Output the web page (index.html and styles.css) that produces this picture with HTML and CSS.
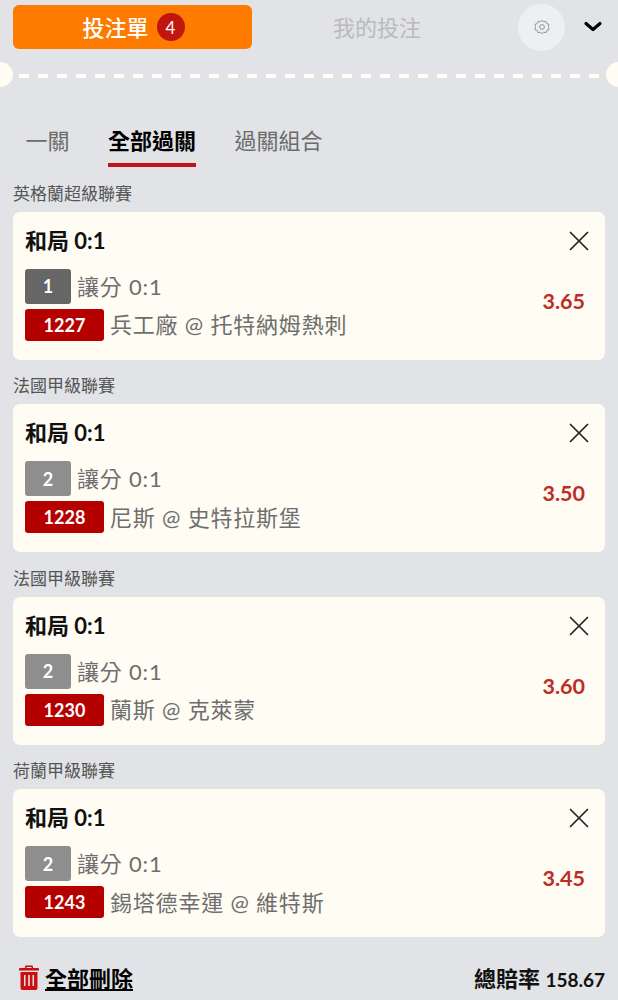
FILE: index.html
```html
<!DOCTYPE html>
<html lang="zh-Hant">
<head>
  <meta charset="UTF-8" />
  <meta name="viewport" content="width=device-width, initial-scale=1.0"/>
  <title>投注單</title>
  <link rel="stylesheet" href="styles.css">
</head>
<body>
  <div class="app">
    <div class="topbar">
      <button class="slip-btn"><span class="slip-label">投注單</span> <span class="count">4</span></button>
      <div class="my-bets">我的投注</div>
      <div class="gear">
        <svg width="16" height="16" viewBox="0 0 24 24" fill="none" stroke="#8b8b8e" stroke-width="1.4" stroke-linejoin="round">
          <path d="M12 2l2.6 2.200 3.400-.6 1.200 3.200 3.200 1.200-.6 3.400L22 12l-.2.6.6 3.400-3.200 1.200-1.200 3.200-3.400-.6L12 22l-2.600-2.200-3.400.6-1.200-3.200-3.200-1.200.6-3.400L2 12l.2-.6-.6-3.400 3.200-1.200L6 3.600l3.400.6z"/>
          <circle cx="12" cy="12" r="3.6"/>
        </svg>
      </div>
      <svg class="chevron" width="20" height="12" viewBox="0 0 20 12" fill="none" stroke="#000" stroke-width="3.200" stroke-linecap="round" stroke-linejoin="round">
        <path d="M3 2.500L10 8.500l7-6"/>
      </svg>
    </div>

    <div class="divider"></div>

    <div class="tabs">
      <div class="tab">一關</div>
      <div class="tab active">全部過關</div>
      <div class="tab">過關組合</div>
    </div>

    <div class="league">英格蘭超級聯賽</div>
    <div class="card">
      <div class="card-main">
        <div class="pick">和局 0:1</div>
        <div class="row row-first"><span class="tag dark">1</span><span class="info">讓分 0:1</span></div>
        <div class="row"><span class="code">1227</span><span class="info">兵工廠 @ 托特納姆熱刺</span></div>
      </div>
      <div class="card-side">
        <svg class="close" width="22" height="22" viewBox="0 0 22 22" stroke="#222" stroke-width="1.700" stroke-linecap="round"><path d="M2.500 2.500l17 17M19.500 2.500l-17 17"/></svg>
        <div class="odds">3.65</div>
      </div>
    </div>

    <div class="league">法國甲級聯賽</div>
    <div class="card">
      <div class="card-main">
        <div class="pick">和局 0:1</div>
        <div class="row row-first"><span class="tag">2</span><span class="info">讓分 0:1</span></div>
        <div class="row"><span class="code">1228</span><span class="info">尼斯 @ 史特拉斯堡</span></div>
      </div>
      <div class="card-side">
        <svg class="close" width="22" height="22" viewBox="0 0 22 22" stroke="#222" stroke-width="1.700" stroke-linecap="round"><path d="M2.500 2.500l17 17M19.500 2.500l-17 17"/></svg>
        <div class="odds">3.50</div>
      </div>
    </div>

    <div class="league">法國甲級聯賽</div>
    <div class="card">
      <div class="card-main">
        <div class="pick">和局 0:1</div>
        <div class="row row-first"><span class="tag">2</span><span class="info">讓分 0:1</span></div>
        <div class="row"><span class="code">1230</span><span class="info">蘭斯 @ 克萊蒙</span></div>
      </div>
      <div class="card-side">
        <svg class="close" width="22" height="22" viewBox="0 0 22 22" stroke="#222" stroke-width="1.700" stroke-linecap="round"><path d="M2.500 2.500l17 17M19.500 2.500l-17 17"/></svg>
        <div class="odds">3.60</div>
      </div>
    </div>

    <div class="league">荷蘭甲級聯賽</div>
    <div class="card">
      <div class="card-main">
        <div class="pick">和局 0:1</div>
        <div class="row row-first"><span class="tag">2</span><span class="info">讓分 0:1</span></div>
        <div class="row"><span class="code">1243</span><span class="info">錫塔德幸運 @ 維特斯</span></div>
      </div>
      <div class="card-side">
        <svg class="close" width="22" height="22" viewBox="0 0 22 22" stroke="#222" stroke-width="1.700" stroke-linecap="round"><path d="M2.500 2.500l17 17M19.500 2.500l-17 17"/></svg>
        <div class="odds">3.45</div>
      </div>
    </div>

    <div class="footer">
      <div class="delete-all">
        <svg width="20" height="25" viewBox="0 0 20 25" fill="#c90f0f">
          <path d="M7 0.500h6a1 1 0 0 1 1 1V3h5a1 1 0 0 1 1 1v1.500H0V4a1 1 0 0 1 1-1h5V1.500a1 1 0 0 1 1-1zM7.500 2v1h5V2z"/>
          <path fill-rule="evenodd" d="M1.500 7h17v16a2 2 0 0 1-2 2h-13a2 2 0 0 1-2-2zM5 10v11h1.500V10zm4.200 0v11h1.600V10zm4.300 0v11H15V10z"/>
        </svg>
        <span class="delete-text">全部刪除</span>
      </div>
      <div class="total">總賠率 <span class="total-num">158.67</span></div>
    </div>
  </div>
</body>
</html>
```

FILE: styles.css
```css
* {
  box-sizing: border-box;
}

html, body {
  margin: 0;
  padding: 0;
}

body {
  width: 618px;
  height: 1000px;
  overflow: hidden;
  background: #e2e3e6;
  font-family: Lato, 'Noto Sans CJK TC', sans-serif;
  color: #000;
}

.app {
  padding: 5px 13px 0;
}

.topbar {
  display: flex;
  align-items: center;
  height: 44px;
}

.slip-btn {
  width: 239px;
  height: 44px;
  display: flex;
  align-items: center;
  justify-content: center;
  gap: 8px;
  border: none;
  border-radius: 6px;
  background: #ff7b00;
  color: #fff;
  font-family: inherit;
  font-size: 22px;
  font-weight: 500;
  padding: 0 0 0 2px;
}

.slip-label {
  padding-bottom: 2px;
}

.count {
  width: 28px;
  height: 28px;
  border-radius: 50%;
  background: #c1150f;
  color: #fff;
  font-size: 17px;
  font-weight: 400;
  display: flex;
  align-items: center;
  justify-content: center;
}

.my-bets {
  width: 250px;
  padding-bottom: 3px;
  text-align: center;
  font-size: 22px;
  color: #b9babc;
}

.gear {
  width: 47px;
  height: 47px;
  margin-left: 16px;
  border-radius: 50%;
  background: #eeeff3;
  display: flex;
  align-items: center;
  justify-content: center;
  flex-shrink: 0;
}

.chevron {
  margin-left: 18px;
  flex-shrink: 0;
}

.divider {
  position: relative;
  height: 4px;
  margin: 25px 6px 0 6px;
  background: repeating-linear-gradient(to right, #fffcf3 0, #fffcf3 10px, transparent 10px, transparent 19px);
}

.divider::before,
.divider::after {
  content: "";
  position: absolute;
  top: -12px;
  width: 25px;
  height: 25px;
  border-radius: 50%;
  background: #fffcf3;
}

.divider::before {
  left: -31px;
}

.divider::after {
  right: -32px;
}

.tabs {
  display: flex;
  gap: 38.5px;
  margin: 43px 0 1.1px;
  padding-left: 12.5px;
}

.tab {
  height: 46px;
  padding-top: 2px;
  font-size: 22px;
  line-height: 36px;
  color: #6b6b6b;
}

.tab.active {
  color: #000;
  font-weight: 700;
  border-bottom: 4px solid #c1141a;
}

.league {
  height: 26px;
  margin-top: 13.5px;
  font-size: 17px;
  line-height: 26px;
  color: #555;
}

.card {
  display: flex;
  justify-content: space-between;
  width: 592px;
  height: 148px;
  margin-top: 5px;
  padding: 13px 20px 0 12px;
  border-radius: 7px;
  background: #fffcf3;
}

.pick {
  height: 32px;
  font-size: 22px;
  font-weight: 700;
  line-height: 32px;
  color: #111;
}

.row {
  display: flex;
  align-items: center;
  gap: 6px;
  margin-top: 5px;
  height: 32px;
}

.row-first {
  margin-top: 12px;
  height: 35px;
}

.tag {
  width: 46px;
  height: 35px;
  border-radius: 3px;
  background: #8e8e8e;
  color: #fff;
  font-size: 18px;
  font-weight: 700;
  display: flex;
  align-items: center;
  justify-content: center;
}

.tag.dark {
  background: #666;
}

.code {
  width: 79px;
  height: 32px;
  border-radius: 3px;
  background: #b50000;
  color: #fff;
  font-size: 18px;
  font-weight: 700;
  display: flex;
  align-items: center;
  justify-content: center;
}

.info {
  padding-bottom: 3px;
  font-size: 22px;
  color: #6e6e6e;
  letter-spacing: 0.8px;
}

.card-side {
  display: flex;
  flex-direction: column;
  align-items: flex-end;
}

.close {
  margin-top: 5px;
  margin-right: -5px;
}

.odds {
  margin-top: 36px;
  font-size: 21.5px;
  font-weight: 700;
  color: #be2c26;
}

.footer {
  display: flex;
  justify-content: space-between;
  align-items: center;
  margin-top: 24px;
  padding-left: 6px;
}

.delete-all {
  display: flex;
  align-items: center;
  gap: 6px;
}

.delete-text {
  font-size: 22px;
  font-weight: 700;
  text-decoration: underline;
}

.total {
  font-size: 22px;
  font-weight: 700;
  color: #111;
}

.total-num {
  font-size: 19px;
}
```
